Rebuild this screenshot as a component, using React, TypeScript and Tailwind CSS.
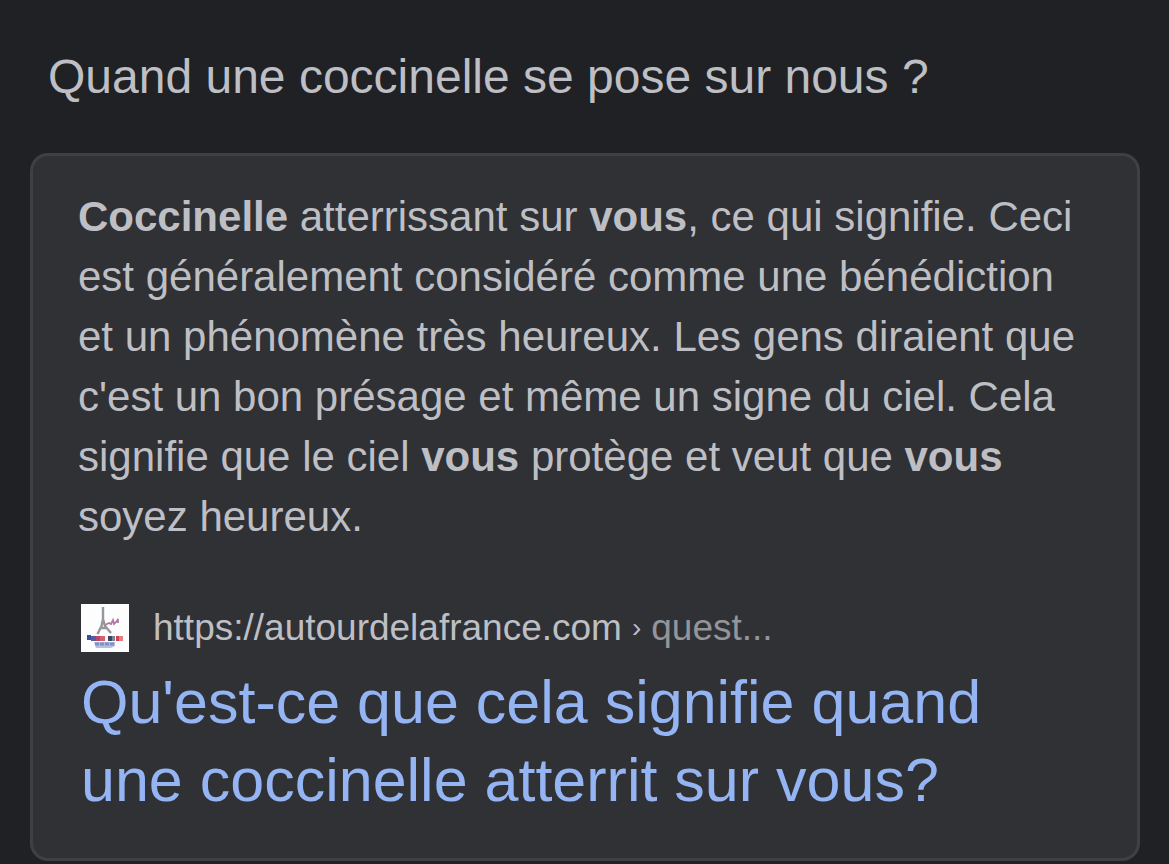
function SiteIcon() {
  return (
    <svg viewBox="0 0 48 48" className="size-12 shrink-0" aria-hidden="true">
      <rect width="48" height="48" fill="#fdfdfd" />
      {/* tower */}
      <path d="M22 3v12l-1.500 7-4 8M22 15l2 7 6 7M19 24h6" fill="none" stroke="#96979b" strokeWidth="2.400" />
      {/* script flourish */}
      <path d="M24 21l4-2 2 1 2-4 1 4 3-3 1-2v4" fill="none" stroke="#b07aa4" strokeWidth="1.800" />
      {/* tricolour lettering band */}
      <rect x="6" y="31" width="4" height="5" fill="#3450a6" />
      <rect x="10" y="32" width="5" height="5" fill="#5a5a9c" />
      <rect x="15" y="32" width="4" height="5" fill="#b8486e" />
      <rect x="19" y="32" width="5" height="5" fill="#d8606c" />
      <rect x="27" y="32" width="4" height="5" fill="#3c4660" />
      <rect x="31" y="32" width="3" height="5" fill="#7c8494" />
      <rect x="35" y="32" width="3" height="5" fill="#d8404c" />
      <rect x="38" y="32" width="4" height="5" fill="#e08088" />
      <path d="M13 38h21v4l-4 2H15z" fill="#b4c0de" />
      <path d="M14 40h19" stroke="#8090c0" strokeWidth="3" strokeDasharray="4 1" />
    </svg>
  )
}

export default function App() {
  return (
    <main className="min-h-screen bg-[#202124] pt-12 pr-[29px] pb-[3px] pl-[30px] font-['Liberation_Sans',Arial,sans-serif] text-[#bebfc4]">
      <h1 className="px-[18px] text-[48px] leading-[58px]">Quand une coccinelle se pose sur nous ?</h1>

      <article className="mt-[47px] rounded-[18px] border-3 border-[#3f4043] bg-[#303134] px-[45px] pt-[31px] pb-[39px]">
        <p className="text-[42px] leading-[60px]">
          <b>Coccinelle</b> atterrissant sur <b>vous</b>, ce qui signifie. Ceci est généralement considéré comme une
          bénédiction et un phénomène très heureux. Les gens diraient que c'est un bon présage et même un signe du
          ciel. Cela signifie que le ciel <b>vous</b> protège et veut que <b>vous</b> soyez heureux.
        </p>

        <a href="#source" className="mt-[57px] block px-[3px]">
          <div className="flex items-center gap-6 text-[37px] leading-[48px]">
            <SiteIcon />
            <cite className="flex min-w-0 items-center gap-[10px] not-italic">
              <span className="truncate">https://autourdelafrance.com</span>
              <span className="text-[28px] leading-8">›</span>
              <span className="text-[#94959a]">quest...</span>
            </cite>
          </div>
          <h2 className="mt-[11px] text-[61px] leading-[78px] text-[#94b4f4]">
            Qu'est-ce que cela signifie quand une coccinelle atterrit sur vous?
          </h2>
        </a>
      </article>
    </main>
  )
}
